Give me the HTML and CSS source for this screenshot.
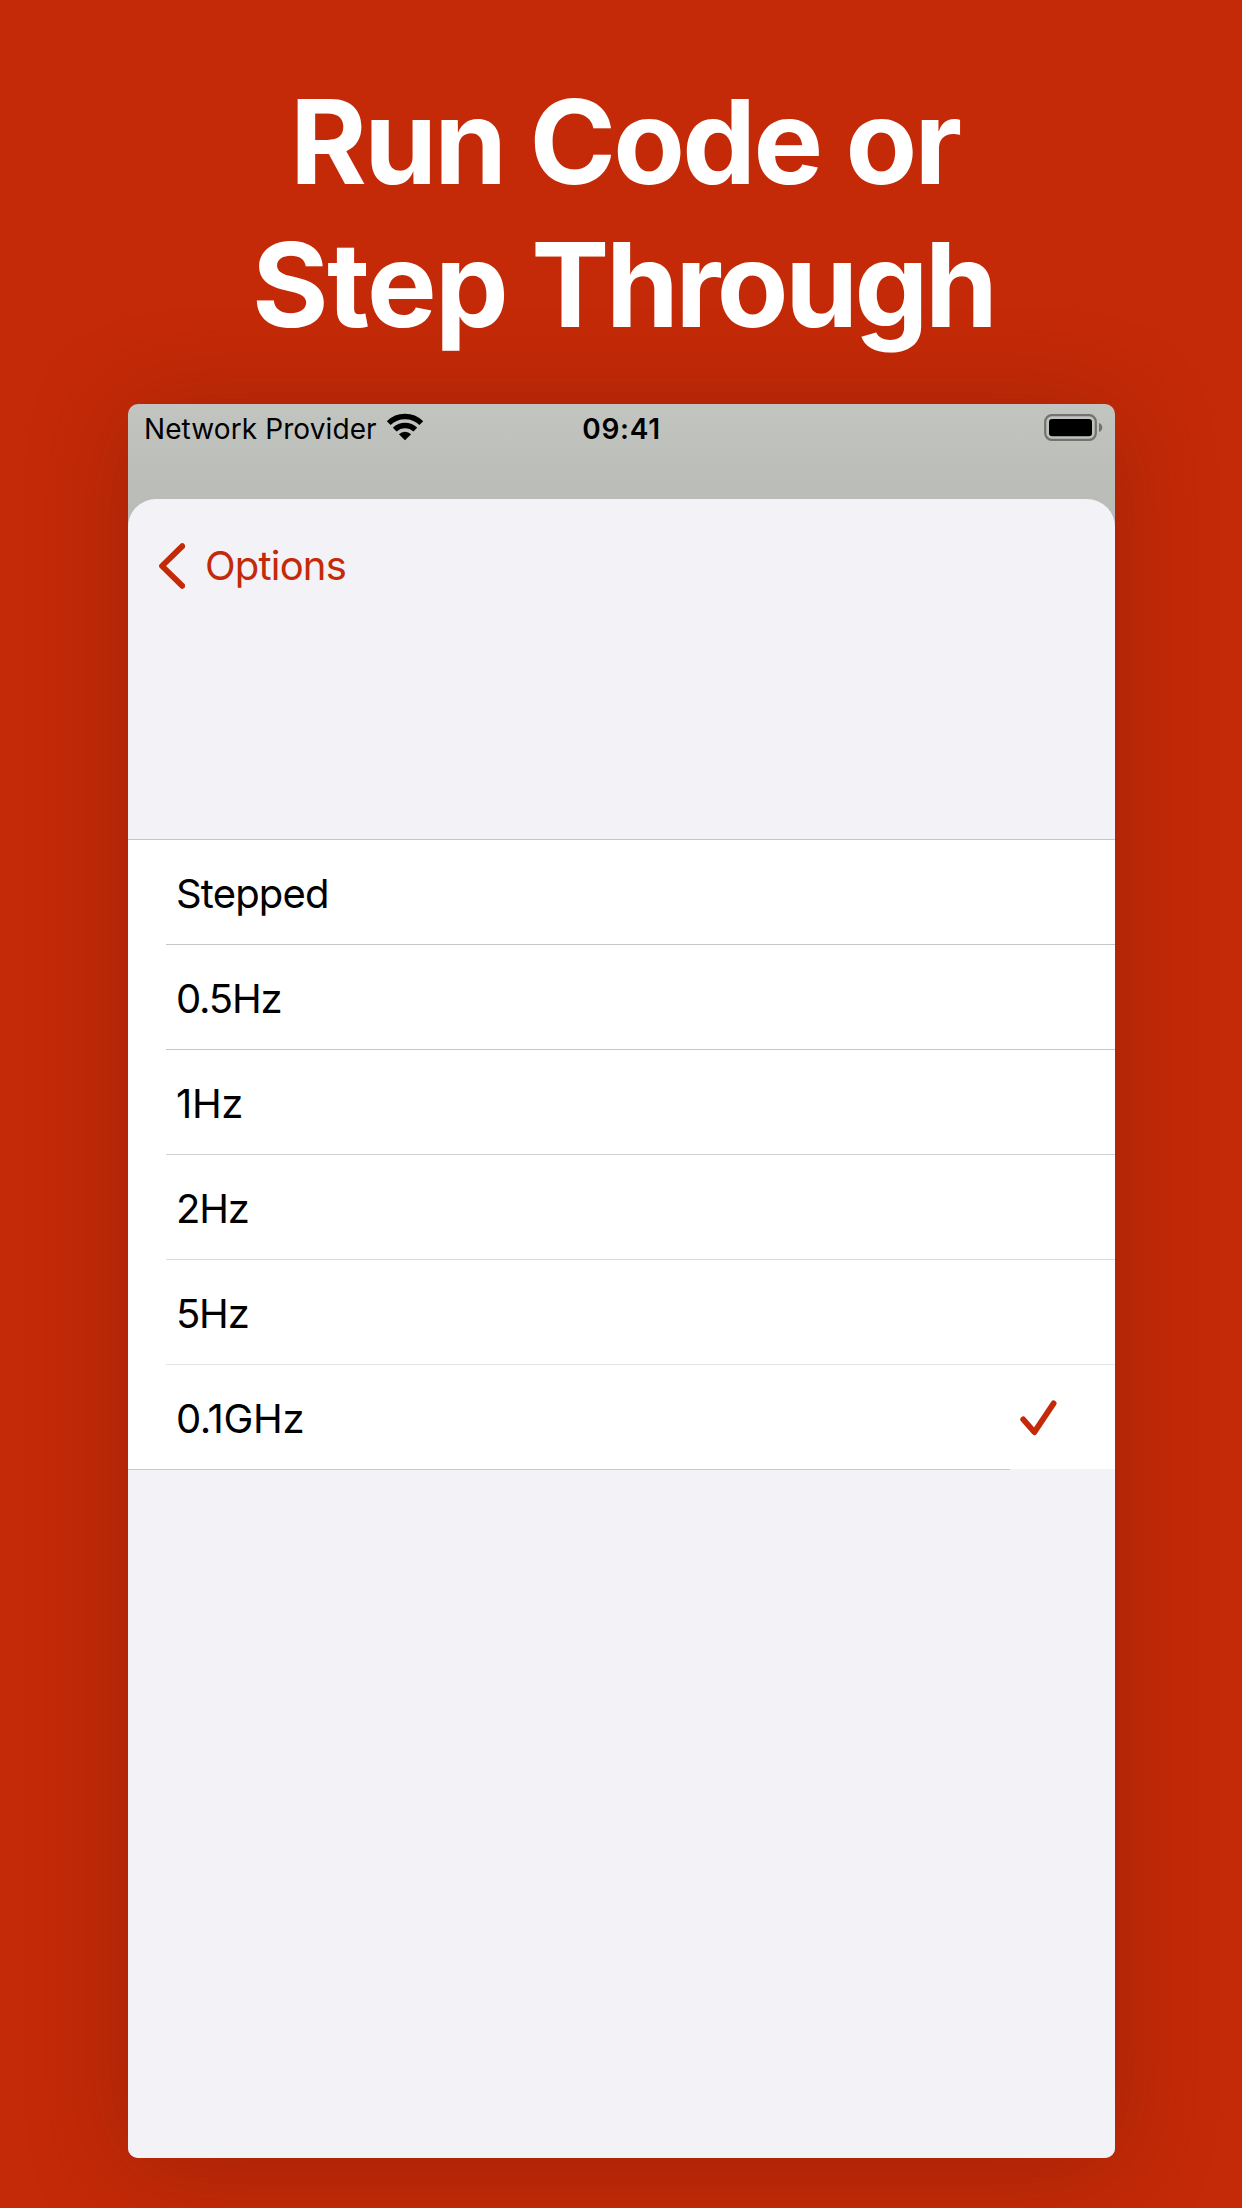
FILE: index.html
```html
<!DOCTYPE html>
<html lang="en">
<head>
<meta charset="utf-8">
<title>Run Code or Step Through</title>
<link rel="stylesheet" href="styles.css">
</head>
<body>
<h1 class="headline"><span class="line line-top">Run Code or</span><span class="line line-bottom"><span class="word-step">Step</span> Through</span></h1>
<main class="device">
  <header class="status">
    <div class="carrier">
      <span class="carrier-name">Network Provider</span>
      <svg class="wifi" width="38" height="28" viewBox="0 0 38 28">
        <g fill="none" stroke="#000" stroke-width="5.4">
          <path d="M2.7 10.2A23.2 23.2 0 0 1 35.3 10.2"/>
          <path d="M8.7 16.6A14.8 14.8 0 0 1 29.3 16.6"/>
        </g>
        <path d="M19 27.2L12.9 21.3A8.6 8.6 0 0 1 25.1 21.3Z"/>
      </svg>
    </div>
    <span class="time">09:41</span>
    <svg class="battery" width="59" height="27" viewBox="0 0 59 27">
      <rect x="1.2" y="1.2" width="50.6" height="24.6" rx="6.5" fill="none" stroke="#72736f" stroke-width="2.2"/>
      <rect x="5" y="5" width="43" height="17.2" rx="3"/>
      <path d="M55 9C59.4 10.6 59.4 16.4 55 18Z" fill="#72736f"/>
    </svg>
  </header>
  <section class="sheet">
    <nav class="nav">
      <svg class="chevron" width="26" height="46" viewBox="0 0 26 46"><path d="M23.3 3.2L3 23L23.3 42.8"/></svg>
      <span class="back">Options</span>
    </nav>
    <ul class="list">
      <li class="row"><span class="label">Stepped</span></li>
      <li class="row"><span class="label decimal">0.5Hz</span></li>
      <li class="row"><span class="label narrow">1Hz</span></li>
      <li class="row light"><span class="label decimal">2Hz</span></li>
      <li class="row lighter"><span class="label decimal">5Hz</span></li>
      <li class="row lightest"><span class="label narrow">0.1GHz</span>
        <svg class="check" width="38" height="36" viewBox="0 0 38 36"><path d="M4.2 19.4L15.4 32.2L34.6 3.4"/></svg>
      </li>
    </ul>
    <div class="list-end"></div>
  </section>
</main>
</body>
</html>
```
FILE: styles.css
```css
* { box-sizing: border-box; margin: 0; padding: 0; }
body {
  width: 1242px;
  height: 2208px;
  overflow: hidden;
  background: #c42a07;
  font-family: Inter, "Liberation Sans", sans-serif;
  color: #000;
}
.headline {
  height: 404px;
  padding-top: 70px;
  color: #fff;
  font-size: 117px;
  font-weight: 700;
  line-height: 143px;
}
.line { display: block; width: max-content; white-space: nowrap; }
.line-top { margin-left: 290px; letter-spacing: -2.7px; }
.line-bottom { margin-left: 252px; letter-spacing: -3.4px; }
.word-step { letter-spacing: -1.7px; }
.device {
  width: 987px;
  height: 1754px;
  margin-left: 128px;
  border-radius: 10px;
  background: linear-gradient(#c2c4c0, #babcb8 95px);
  box-shadow: 0 8px 100px rgba(70, 15, 0, .27);
}
.status {
  display: grid;
  grid-template-columns: 1fr auto 1fr;
  align-items: center;
  height: 50px;
  margin-bottom: 45px;
  padding: 0 12px 0 16px;
  font-size: 28px;
  line-height: 34px;
}
.carrier { display: flex; align-items: center; gap: 9px; letter-spacing: .1px; }
.wifi, .battery { margin-bottom: 4px; }
.time { margin-right: 4px; font-weight: 600; letter-spacing: .7px; }
.battery { justify-self: end; }
.sheet {
  height: 1659px;
  border-radius: 28px 28px 10px 10px;
  background: #f2f2f7;
}
.nav {
  display: flex;
  align-items: center;
  gap: 20px;
  height: 340px;
  padding: 44px 0 250px 31px;
  color: #c42a07;
  font-size: 40px;
}
.back { margin-bottom: 2px; letter-spacing: -.8px; }
.chevron path, .check path {
  fill: none;
  stroke: #c42a07;
  stroke-width: 5.8;
  stroke-linecap: round;
  stroke-linejoin: round;
}
.list { list-style: none; background: #fff; border-top: 1px solid #c5c5c8; }
.row {
  display: flex;
  align-items: center;
  justify-content: space-between;
  height: 105px;
  margin-left: 38px;
  padding: 2px 58px 0 10px;
  font-size: 40px;
  border-top: 1px solid #c6c6c8;
}
.label { letter-spacing: -.85px; }
.label.decimal { letter-spacing: -1.2px; }
.label.narrow { letter-spacing: -.35px; }
.row:first-child { height: 104px; border-top: 0; }
.row.light { border-color: #d2d2d4; }
.row.lighter { border-color: #dcdcde; }
.row.lightest { border-color: #e4e4e6; }
.list-end { width: 882px; height: 1px; background: #cbcbce; }
```
